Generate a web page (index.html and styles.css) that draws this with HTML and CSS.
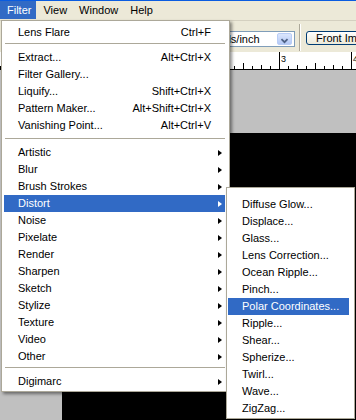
FILE: index.html
```html
<!DOCTYPE html>
<html>
<head>
	<title>Filter menu</title>
	<link rel="stylesheet" href="styles.css">
</head>
<body>
	<div class="titleLine"></div>

	<div class="menuBar">
		<span class="barItem open">Filter</span>
		<span class="barItem">View</span>
		<span class="barItem">Window</span>
		<span class="barItem">Help</span>
	</div>

	<div class="optionsBar">
		<div class="unitSelect">
			<span class="unitText">Pixels/inch</span>
			<span class="dropBtn">
				<svg width="15" height="13" viewBox="0 0 15 13"><path d="M4 5 L7.5 8.5 L11 5" fill="none" stroke="#4d6185" stroke-width="2"/></svg>
			</span>
		</div>
		<div class="optionsSep"></div>
		<button class="frontBtn">Front Image</button>
	</div>

	<div class="ruler">
		<span>3</span><span>4</span>
	</div>

	<div class="workspace">
		<div class="doc"></div>
	</div>

	<!-- open Filter menu -->
	<ul class="menu mainMenu">
		<li><span class="label">Lens Flare</span><span class="key">Ctrl+F</span></li>
		<li class="sep"></li>
		<li><span class="label">Extract...</span><span class="key">Alt+Ctrl+X</span></li>
		<li><span class="label">Filter Gallery...</span></li>
		<li><span class="label">Liquify...</span><span class="key">Shift+Ctrl+X</span></li>
		<li><span class="label">Pattern Maker...</span><span class="key">Alt+Shift+Ctrl+X</span></li>
		<li><span class="label">Vanishing Point...</span><span class="key">Alt+Ctrl+V</span></li>
		<li class="sep wide"></li>
		<li><span class="label">Artistic</span><span class="arrow"></span></li>
		<li><span class="label">Blur</span><span class="arrow"></span></li>
		<li><span class="label">Brush Strokes</span><span class="arrow"></span></li>
		<li class="active"><span class="label">Distort</span><span class="arrow"></span></li>
		<li><span class="label">Noise</span><span class="arrow"></span></li>
		<li><span class="label">Pixelate</span><span class="arrow"></span></li>
		<li><span class="label">Render</span><span class="arrow"></span></li>
		<li><span class="label">Sharpen</span><span class="arrow"></span></li>
		<li><span class="label">Sketch</span><span class="arrow"></span></li>
		<li><span class="label">Stylize</span><span class="arrow"></span></li>
		<li><span class="label">Texture</span><span class="arrow"></span></li>
		<li><span class="label">Video</span><span class="arrow"></span></li>
		<li><span class="label">Other</span><span class="arrow"></span></li>
		<li class="sep"></li>
		<li><span class="label">Digimarc</span><span class="arrow"></span></li>
	</ul>

	<!-- Distort submenu -->
	<ul class="menu subMenu">
		<li><span class="label">Diffuse Glow...</span></li>
		<li><span class="label">Displace...</span></li>
		<li><span class="label">Glass...</span></li>
		<li><span class="label">Lens Correction...</span></li>
		<li><span class="label">Ocean Ripple...</span></li>
		<li><span class="label">Pinch...</span></li>
		<li class="active"><span class="label">Polar Coordinates...</span></li>
		<li><span class="label">Ripple...</span></li>
		<li><span class="label">Shear...</span></li>
		<li><span class="label">Spherize...</span></li>
		<li><span class="label">Twirl...</span></li>
		<li><span class="label">Wave...</span></li>
		<li><span class="label">ZigZag...</span></li>
	</ul>
</body>
</html>
```

FILE: styles.css
```css
*{
	margin: 0;
	padding: 0;
	box-sizing: border-box;
}

body{
	position: relative;
	width: 356px;
	height: 420px;
	overflow: hidden;
	background-color: #c0c0c0;

	font: normal 11px "Liberation Sans", Arial, sans-serif;
	color: #000;
}

.titleLine{
	height: 1px;
	background-color: #0a5ce0;
}

/* menu bar */
.menuBar{
	display: flex;
	height: 19px;
	background-color: #ece9d8;
}

.barItem{
	height: 18px;
	padding: 0 5px 0 7px;
	line-height: 18px;
}

.barItem.open{
	background-color: #316ac5;
	color: #fff;
}

/* options bar */
.optionsBar{
	display: flex;
	align-items: flex-start;
	height: 32px;
	padding-left: 203px;
	border-top: 1px solid #d4d0c0;
	background-color: #ece9d8;
}

.optionsBar > *{
	flex: none;
}

.unitSelect{
	display: flex;
	width: 92px;
	height: 16px;
	margin-top: 10px;
	padding: 1px 2px 1px 3px;
	border: 1px solid #7f9db9;
	background-color: #fff;
}

.unitText{
	flex: 1;
	line-height: 13px;
	white-space: nowrap;
}

.dropBtn{
	display: flex;
	width: 15px;
	height: 12px;
	border-radius: 2px;
	background: linear-gradient(#dbe6fd, #b4c9f6);
	border: 1px solid #b9cdf6;
}

.optionsSep{
	width: 2px;
	height: 27px;
	margin: 3px 0 0 4px;
	border-left: 1px solid #aca899;
	border-right: 1px solid #fff;
}

.frontBtn{
	height: 14px;
	margin: 10px 0 0 5px;
	padding: 0 9px;
	border: 1px solid #003c74;
	border-radius: 3px;
	background: linear-gradient(#fff, #ece9d8);

	font: inherit;
	line-height: 12px;
	white-space: nowrap;
}

/* ruler, inch marks every 72px */
.ruler{
	display: flex;
	height: 18px;
	padding-left: 281px;
	border-bottom: 1px solid #000;
	background-color: #fff;
	background-image:
		linear-gradient(to right, #000 1px, transparent 1px),
		linear-gradient(to right, #000 1px, transparent 1px),
		linear-gradient(to right, #000 1px, transparent 1px),
		linear-gradient(to right, #000 1px, transparent 1px);
	background-size: 72px 17px, 36px 6px, 18px 4px, 9px 3px;
	background-position: 63px 0, 27px 100%, 9px 100%, 0 100%;
	background-repeat: repeat-x;

	font-size: 9px;
	line-height: 11px;
}

.ruler span{
	flex: none;
	width: 72px;
	padding-top: 2px;
}

/* document area */
.workspace{
	display: flex;
	height: 350px;
	padding: 63px 0 0 62px;
}

.doc{
	flex: 1;
	background-color: #000;
}

/* menus */
.menu{
	position: absolute;
	list-style: none;
	border: 1px solid #aca899;
	background-color: #fff;
	box-shadow: 2px 2px 3px rgba(0, 0, 0, 0.45);
}

.mainMenu{
	top: 20px;
	left: 1px;
	width: 229px;
	padding: 3px 4px 1px 2px;
}

.subMenu{
	top: 187px;
	left: 226px;
	width: 129px;
	padding: 8px 5px 1px 1px;
}

.menu li{
	display: flex;
	align-items: center;
	height: 17px;
	padding: 0 14px;
	line-height: 17px;
	white-space: nowrap;
}

.menu li .label{
	flex: 1;
}

.menu li .arrow{
	width: 0;
	height: 0;
	margin-right: -11px;
	border-top: 3px solid transparent;
	border-bottom: 3px solid transparent;
	border-left: 4px solid #000;
}

.menu li.active{
	background-color: #316ac5;
	color: #fff;
}

.menu li.active .arrow{
	border-left-color: #fff;
}

.menu li.sep{
	height: 8px;
	padding: 2px 0 0 1px;
}

.menu li.sep.wide{
	height: 10px;
	padding-top: 4px;
}

.menu li.sep::before{
	content: "";
	flex: 1;
	align-self: flex-start;
	height: 1px;
	background-color: #aca899;
}
```
